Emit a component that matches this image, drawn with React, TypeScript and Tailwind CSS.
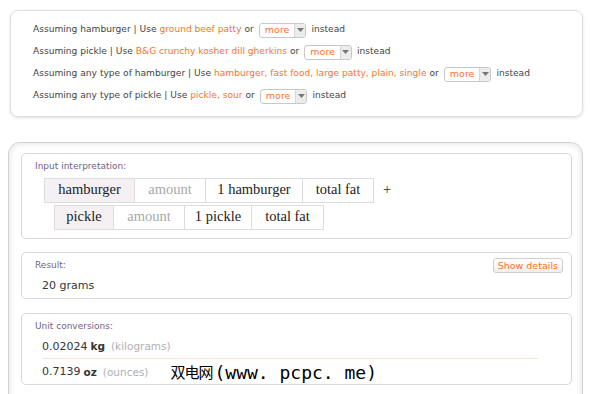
import React from "react";

const sans = "font-['DejaVu_Sans',sans-serif]";
const serif = "font-['Liberation_Serif',serif]";

const MoreSelect: React.FC = () => (
  <span className="inline-flex items-stretch h-[15px] mx-[5px] rounded-[3px] border border-[#c8c8c8] bg-white overflow-hidden">
    <span className="flex items-center px-[5px] text-[#f7742c] text-[9.5px]">more</span>
    <span className="w-[11px] flex items-center justify-center bg-[#ececec] border-l border-[#d6d6d6]">
      <svg width="7" height="4" viewBox="0 0 7 4">
        <path d="M0 0h7L3.5 4z" fill="#777" />
      </svg>
    </span>
  </span>
);

const assumptions: { lead: string; links: string }[] = [
  { lead: "Assuming hamburger | Use ", links: "ground beef patty" },
  { lead: "Assuming pickle | Use ", links: "B&G crunchy kosher dill gherkins" },
  { lead: "Assuming any type of hamburger | Use ", links: "hamburger, fast food, large patty, plain, single" },
  { lead: "Assuming any type of pickle | Use ", links: "pickle, sour" },
];

type Cell = { text: string; w: string; kind?: "head" | "faint" };

const Row: React.FC<{ cells: Cell[]; className?: string; plus?: boolean }> = ({ cells, className, plus }) => (
  <div className={`flex items-center ${className ?? ""}`}>
    {cells.map((c, i) => (
      <div
        key={i}
        className={`${c.w} h-[25px] flex items-center justify-center border-y border-r border-[#dcdcdc] ${i === 0 ? "border-l" : ""} ${
          c.kind === "head" ? "bg-[#f4f0f4] text-[#222]" : c.kind === "faint" ? "text-[#a8a8a8]" : "text-[#222]"
        }`}
      >
        {c.text}
      </div>
    ))}
    {plus && <span className="ml-[9px] text-[#333]">+</span>}
  </div>
);

const PodLabel: React.FC<{ children: React.ReactNode }> = ({ children }) => (
  <div className={`${sans} text-[9px] text-[#735f86]`}>{children}</div>
);

export default function App() {
  return (
    <div className="w-[590px] h-[394px] overflow-hidden bg-white">
      {/* assumptions box */}
      <div className={`${sans} ml-[10px] mt-[10px] w-[573px] h-[107px] rounded-[8px] border border-[#dedede] shadow-[0_1px_3px_rgba(0,0,0,0.12)] pt-[8px] pl-[22px] text-[9.1px] text-[#444]`}>
        {assumptions.map((a, i) => (
          <div key={i} className="h-[22px] flex items-center whitespace-nowrap">
            <span>{a.lead}</span>
            <span className="text-[#f7742c] ml-[3px]">{a.links}</span>
            <span className="ml-[3px]">or</span>
            <MoreSelect />
            <span>instead</span>
          </div>
        ))}
      </div>

      {/* results frame */}
      <div className="ml-[8px] mt-[25px] w-[575px] rounded-[12px] border border-[#d2d2d2] shadow-[inset_0_0_7px_rgba(0,0,0,0.13)] pt-[10px] pl-[12px] pr-[10px] pb-[20px]">
        <div className="h-[86px] rounded-[5px] border border-[#d8d8d8] bg-white pt-[6px] pl-[13px]">
          <PodLabel>Input interpretation:</PodLabel>
          <div className={`${serif} text-[14.5px] mt-[4px]`}>
            <Row
              className="ml-[9px]"
              plus
              cells={[
                { text: "hamburger", w: "w-[91px]", kind: "head" },
                { text: "amount", w: "w-[71px]", kind: "faint" },
                { text: "1 hamburger", w: "w-[97px]" },
                { text: "total fat", w: "w-[71px]" },
              ]}
            />
            <Row
              className="ml-[19px] mt-[2px]"
              cells={[
                { text: "pickle", w: "w-[60px]", kind: "head" },
                { text: "amount", w: "w-[71px]", kind: "faint" },
                { text: "1 pickle", w: "w-[67px]" },
                { text: "total fat", w: "w-[72px]" },
              ]}
            />
          </div>
        </div>

        <div className="mt-[13px] h-[47px] rounded-[5px] border border-[#d8d8d8] bg-white pl-[13px] pr-[8px]">
          <div className="flex items-start justify-between pt-[5px]">
            <div className="pt-[1px]">
              <PodLabel>Result:</PodLabel>
            </div>
            <button className={`${sans} h-[15px] px-[4px] rounded-[3px] border border-[#cfcfcf] bg-gradient-to-b from-white to-[#efefef] text-[9.5px] leading-[13px] text-[#f7742c]`}>
              Show details
            </button>
          </div>
          <div className={`${sans} text-[11px] text-[#333] pl-[7px] mt-[5px]`}>20 grams</div>
        </div>

        <div className="mt-[14px] h-[72px] rounded-[5px] border border-[#d8d8d8] bg-white pl-[13px]">
          <div className="pt-[6px]">
            <PodLabel>Unit conversions:</PodLabel>
          </div>
          <div className={`${sans} text-[11px] text-[#333] pl-[7px]`}>
            <div className="h-[21px] flex items-center mt-[3px]">
              <span>0.02024</span>
              <span className="ml-[3px] font-bold text-[10.5px]">kg</span>
              <span className="ml-[6px] text-[#b0b0b0] text-[10.5px]">(kilograms)</span>
            </div>
            <div className="w-[496px] h-px bg-[#efe6d6]" />
            <div className="h-[28px] flex items-center">
              <span>0.7139</span>
              <span className="ml-[3px] font-bold text-[10.5px]">oz</span>
              <span className="ml-[6px] text-[#b0b0b0] text-[10.5px]">(ounces)</span>
              <span className="ml-[22px] flex items-center text-black whitespace-nowrap">
                <span className="font-['Noto_Sans_CJK_SC',sans-serif] text-[15px] tracking-[-1px]">双电网</span>
                <span className="font-['DejaVu_Sans_Mono','Noto_Sans_CJK_SC',monospace] text-[18px] ml-[2px]">(www. pcpc. me)</span>
              </span>
            </div>
          </div>
        </div>
      </div>
    </div>
  );
}
